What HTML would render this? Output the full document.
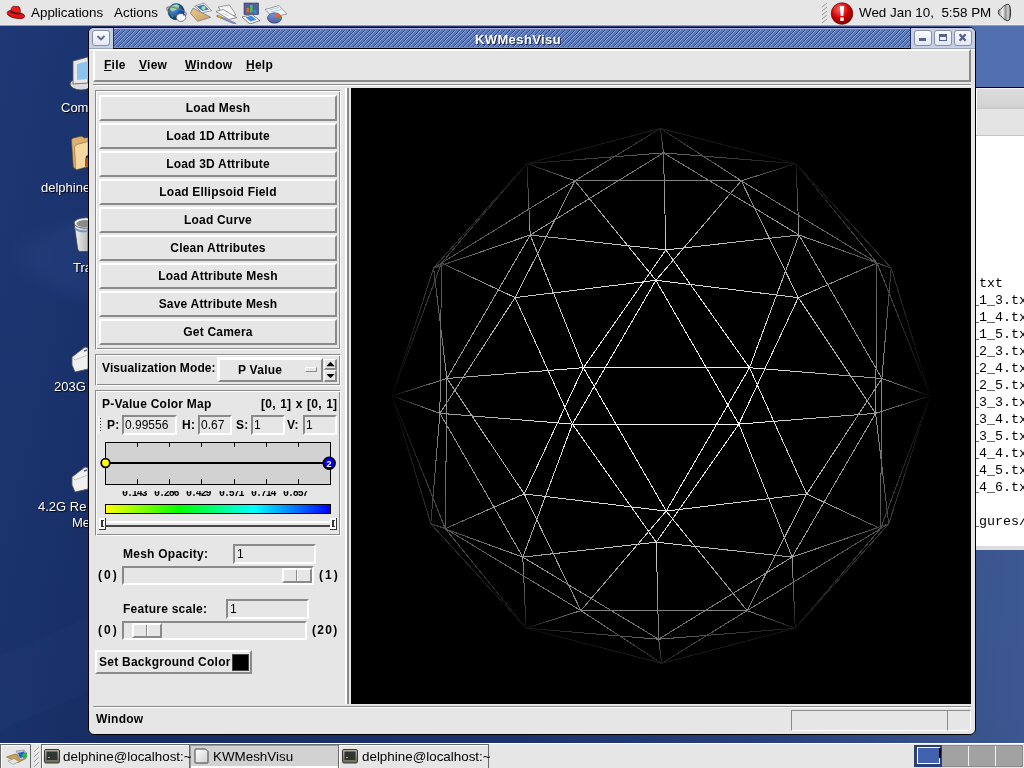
<!DOCTYPE html>
<html><head><meta charset="utf-8">
<style>
*{margin:0;padding:0;box-sizing:border-box}
html,body{width:1024px;height:768px;overflow:hidden}
body{position:relative;font-family:"Liberation Sans",sans-serif;background:#1b3266}
.a{position:absolute}
body *{will-change:transform}
.r{border-style:solid;border-width:2px;border-color:#fff #8a8a8a #8a8a8a #fff}
.s{border-style:solid;border-width:2px;border-color:#8a8a8a #fff #fff #8a8a8a}
.g{border-style:solid;border-width:1px;border-color:#8a8a8a #fff #fff #8a8a8a;box-shadow:inset 1px 1px 0 #fff, inset -1px -1px 0 #8a8a8a}
.tk{font-size:12px;font-weight:bold;color:#000;white-space:pre;line-height:14px;letter-spacing:0.25px}
.tn{font-size:12px;color:#000;white-space:pre;line-height:14px}
.btn{left:99px;width:238px;height:26px;background:#e6e6e6;font-size:12px;font-weight:bold;text-align:center;line-height:23px;letter-spacing:0.2px}
.ptxt{font-size:13.4px;color:#000;white-space:pre;line-height:15px}
.dtxt{font-size:13px;color:#fff;white-space:pre;line-height:15px;text-shadow:1px 1px 1px #000}
.ent{background:#e6e6e6}
</style></head><body>
<div class="a" style="left:0;top:25px;width:1024px;height:718px;background:linear-gradient(to bottom,rgba(40,70,140,0.10),rgba(0,0,20,0.10)),linear-gradient(90deg,#1d3773 0%,#18316b 12%,#1f3874 50%,#2c4784 75%,#3b5896 90%,#43619f 100%)"></div>
<svg class="a" style="left:0;top:26px" width="90" height="716" viewBox="0 0 90 716">
 <defs><radialGradient id="sw1" cx="0.5" cy="0.5" r="0.5"><stop offset="0.7" stop-color="#3a5aa0" stop-opacity="0.18"/><stop offset="1" stop-color="#3a5aa0" stop-opacity="0"/></radialGradient></defs>
 <ellipse cx="130" cy="232" rx="125" ry="52" fill="url(#sw1)"/>
 <path d="M0 630 L90 590 L90 665 L0 705Z" fill="#3a5aa0" fill-opacity="0.07"/>
</svg>
<!-- top panel -->
<div class="a" style="left:0;top:0;width:1024px;height:24px;background:#e6e6e6"></div>
<div class="a" style="left:0;top:24px;width:1024px;height:1px;background:#ececec"></div>
<div class="a" style="left:0;top:25px;width:1024px;height:1px;background:#a09c94"></div>
<svg class="a" style="left:6px;top:5px" width="20" height="15" viewBox="0 0 20 15">
 <path d="M1.2 7.5 Q2 5.2 5 5.6 L14.5 8 Q19 9 18.6 11.5 Q17.8 14.2 12 13.6 Q5 12.8 2.2 10.2 Q0.8 8.8 1.2 7.5Z" fill="#e81212" stroke="#3a0808" stroke-width="0.7"/>
 <path d="M4.8 6.6 Q5 1.8 7.5 1.2 Q9 1 10 1.6 Q11.5 0.9 13 1.8 Q14.6 3 14.4 8.6 Q9.5 8.8 4.8 6.6Z" fill="#f21a1a" stroke="#400808" stroke-width="0.6"/>
 <path d="M4.8 5.8 Q9.5 8.2 14.5 8 L14.5 9.6 Q9.3 9.8 4.8 7.5Z" fill="#1c1c1c"/>
</svg>
<div class="a ptxt" style="left:31px;top:5px">Applications</div>
<div class="a ptxt" style="left:114px;top:5px">Actions</div>
<!-- launchers -->
<svg class="a" style="left:165px;top:0px" width="124" height="24" viewBox="0 0 124 24">
 <defs>
  <radialGradient id="gl" cx="0.35" cy="0.3" r="0.75"><stop offset="0" stop-color="#60b0f0"/><stop offset="0.6" stop-color="#1050b0"/><stop offset="1" stop-color="#062a70"/></radialGradient>
  <linearGradient id="env" x1="0" y1="0" x2="1" y2="1"><stop offset="0" stop-color="#e8c890"/><stop offset="1" stop-color="#c8a060"/></linearGradient>
  <linearGradient id="pie" x1="0" y1="0" x2="0" y2="1"><stop offset="0" stop-color="#6a9ae8"/><stop offset="1" stop-color="#5a5aa0"/></linearGradient>
 </defs>
 <circle cx="11.2" cy="11.7" r="8.1" fill="url(#gl)" stroke="#102040" stroke-width="0.5"/>
 <path d="M5 9 Q7 4.5 12 4.2 Q15 5.5 13.5 8.5 Q10 10 7 11.5Z" fill="#a0dca0"/>
 <path d="M5 13 Q7 15 9 17 L7 17Z" fill="#40a050"/>
 <ellipse cx="11.5" cy="11.5" rx="10.3" ry="3.4" transform="rotate(18 11.5 11.5)" fill="none" stroke="#707070" stroke-width="1.1"/>
 <ellipse cx="16" cy="17.5" rx="4.8" ry="3.9" fill="#f6f6f6" stroke="#505050" stroke-width="0.7"/>
 <path d="M18 15 L20 14.6" stroke="#4040a0" stroke-width="1"/>
 <path d="M25.4 13.2 L28 8.1 L45.8 17.3 L32.6 21.3Z" fill="url(#env)" stroke="#707070" stroke-width="0.7"/>
 <path d="M29.5 6.1 L39.2 3 L46.8 10.7 L37.1 12.7Z" fill="#f8f8f8" stroke="#7a7a7a" stroke-width="0.7"/>
 <path d="M31.8 6.6 L38.6 4.5 L44 9.6 L37.3 11Z" fill="#3a70c8"/>
 <circle cx="38.5" cy="8" r="2.1" fill="#a8e0a8"/>
 <path d="M53.3 7 L64.5 5 L71 15 L60 17Z" fill="#f4f4f4" stroke="#666" stroke-width="0.6"/>
 <path d="M51 11.5 L58 9.5 L71.8 17.5 L64 19.5Z" fill="#fafafa" stroke="#555" stroke-width="0.6"/>
 <path d="M57 13 L64 16" stroke="#bbb" stroke-width="0.6"/>
 <path d="M52.5 16 L70 23.5" stroke="#8088b8" stroke-width="2.4" stroke-linecap="round"/>
 <path d="M53 16.2 L56.5 17.7" stroke="#c8a030" stroke-width="2.4"/>
 <rect x="79" y="3" width="14.6" height="11.5" fill="#50609a" stroke="#303a60" stroke-width="0.6"/>
 <rect x="81.5" y="8" width="2.6" height="4.5" fill="#f06030"/>
 <rect x="85" y="5" width="2.6" height="7.5" fill="#40c060"/>
 <rect x="88.8" y="10" width="2.6" height="3" fill="#3a8ae8"/>
 <path d="M77 17 L87 14.5 L95 20.5 L85 24Z" fill="#f8f8f8" stroke="#555" stroke-width="0.7"/>
 <path d="M80.5 17.3 L86.5 15.8 L91.5 19.8 L85.5 21.6Z" fill="#3a8ae8"/>
 <path d="M100 9.5 L114 5.5 L122 14 L108 17Z" fill="#f0f6fa" stroke="#666" stroke-width="0.6"/>
 <path d="M104 10 L114 7.5 M106 12 L116 9.5" stroke="#a8d0e8" stroke-width="1"/>
 <ellipse cx="109.5" cy="18" rx="7" ry="5.2" fill="url(#pie)" stroke="#334" stroke-width="0.6"/>
 <path d="M109.5 18 L111 12.9 Q115.5 13.5 116.4 16.5Z" fill="#f06030"/>
 <path d="M109.5 18 L116.4 16.5 Q116.6 18 116.3 19Z" fill="#40a050"/>
</svg>
<!-- tray -->
<svg class="a" style="left:821px;top:2px" width="8" height="21" viewBox="0 0 8 21"><path d="M1 5 L6 1 M1 9 L6 5 M1 13 L6 9 M1 17 L6 13 M1 21 L6 17" stroke="#9a9a9a" stroke-width="1"/></svg>
<svg class="a" style="left:830px;top:2px" width="24" height="23" viewBox="0 0 24 23">
 <defs><radialGradient id="gr" cx="0.4" cy="0.3" r="0.7"><stop offset="0" stop-color="#ff6a6a"/><stop offset="0.6" stop-color="#d00000"/><stop offset="1" stop-color="#800000"/></radialGradient></defs>
 <circle cx="12" cy="11.5" r="10.8" fill="url(#gr)" stroke="#500" stroke-width="0.6"/>
 <path d="M9.8 4 L14.2 4 L13.3 14 L10.7 14Z" fill="#fff"/><rect x="10.3" y="15.5" width="3.4" height="3.4" fill="#fff"/>
</svg>
<div class="a ptxt" style="left:859px;top:5px">Wed Jan 10,&nbsp; 5:58 PM</div>
<svg class="a" style="left:996px;top:3px" width="18" height="19" viewBox="0 0 18 19">
 <defs><linearGradient id="gv" x1="0" y1="0" x2="1" y2="0"><stop offset="0" stop-color="#8a8a8a"/><stop offset="0.35" stop-color="#f0f0f0"/><stop offset="0.6" stop-color="#909090"/><stop offset="0.8" stop-color="#d8d8d8"/><stop offset="1" stop-color="#505050"/></linearGradient></defs>
 <path d="M2.3 9.5 Q2.2 6.8 4.5 6.2 Q7.5 2.5 11 1.2 Q14.6 0.6 14.6 9.2 Q14.6 17.8 11.2 17.9 Q7.5 16.5 4.6 12.8 Q2.4 12 2.3 9.5Z" fill="url(#gv)" stroke="#2a2a2a" stroke-width="0.9"/>
</svg>
<!-- desktop icons -->
<svg class="a" style="left:66px;top:56px" width="22" height="36" viewBox="0 0 22 36">
 <ellipse cx="15" cy="28" rx="11" ry="6" fill="#dcdcdc" stroke="#444" stroke-width="0.8"/>
 <path d="M7 5 L22 1 L22 27 L7 28Z" fill="#e8e8e8" stroke="#555" stroke-width="0.8"/>
 <path d="M11 8 L22 5 L22 23 L11 24Z" fill="#8cc4ee"/>
</svg>
<div class="a dtxt" style="left:61px;top:100px">Com</div>
<svg class="a" style="left:70px;top:135px" width="18" height="36" viewBox="0 0 18 36">
 <path d="M1.5 6 Q1 3.5 3.5 3 L11 1.2 Q13 1 14 3 L18 2.5 L18 30 L5.5 33.5 Q3.5 34 3.2 31.5Z" fill="#dcb070" stroke="#6a4a20" stroke-width="0.7"/>
 <path d="M4.5 14 Q4 10.5 7 9.5 L18 6.5 L18 31.5 L7 34.5 Q5.5 34.8 5.4 33 Q5.6 24 4.5 14Z" fill="#f6d8a0" stroke="#8a6a30" stroke-width="0.6"/>
 <path d="M15 24 L18 23 L18 31 L15 32Z" fill="#b05810"/>
 <path d="M16 21 L18 20 L18 23 L15.5 24Z" fill="#303030"/>
</svg>
<div class="a dtxt" style="left:41px;top:180px">delphine</div>
<svg class="a" style="left:73px;top:214px" width="15" height="38" viewBox="0 0 15 38">
 <defs><linearGradient id="trb" x1="0" x2="1"><stop offset="0" stop-color="#f4f4f4"/><stop offset="1" stop-color="#b8b8b8"/></linearGradient></defs>
 <path d="M1.2 10 L15 8.5 L15 37.5 L7 37.5 Q5 37 4.6 34.5Z" fill="url(#trb)" stroke="#444" stroke-width="0.8"/>
 <ellipse cx="12.5" cy="9" rx="11.5" ry="5.2" fill="#ececec" stroke="#444" stroke-width="0.8"/>
 <ellipse cx="13" cy="9.6" rx="9.5" ry="3.6" fill="#8a8a8a"/>
 <path d="M1.8 14.5 Q7 18.5 15 17" stroke="#6a94cc" stroke-width="1.6" fill="none"/>
</svg>
<div class="a dtxt" style="left:73px;top:260px">Tra</div>
<svg class="a" style="left:71px;top:345px" width="17" height="28" viewBox="0 0 17 28">
 <path d="M1 12 L14 2 L17 3 L17 24 L4 27 L1 20Z" fill="#f0f0f0" stroke="#555" stroke-width="0.8"/>
 <path d="M1 12 L4 15 L17 10" stroke="#bbb" stroke-width="0.8" fill="none"/>
 <path d="M13 6 L16 5" stroke="#5a5aa0" stroke-width="1.5"/>
</svg>
<div class="a dtxt" style="left:54px;top:379px">203G</div>
<svg class="a" style="left:71px;top:465px" width="17" height="28" viewBox="0 0 17 28">
 <path d="M1 12 L14 2 L17 3 L17 24 L4 27 L1 20Z" fill="#f0f0f0" stroke="#555" stroke-width="0.8"/>
 <path d="M1 12 L4 15 L17 10" stroke="#bbb" stroke-width="0.8" fill="none"/>
 <path d="M13 6 L16 5" stroke="#5a5aa0" stroke-width="1.5"/>
</svg>
<div class="a dtxt" style="left:38px;top:499px">4.2G Re</div>
<div class="a dtxt" style="left:72px;top:515px">Me</div>
<!-- background window (right) -->
<div class="a" style="left:970px;top:26px;width:54px;height:61px;background:#5270b0"></div>
<div class="a" style="left:970px;top:87px;width:54px;height:1px;background:#000"></div>
<div class="a" style="left:970px;top:88px;width:54px;height:1px;background:#f4f4f4"></div>
<div class="a" style="left:970px;top:89px;width:54px;height:20px;background:linear-gradient(#dcdcdc,#d4d4d4 80%,#c9c9c9)"></div>
<div class="a" style="left:970px;top:109px;width:54px;height:26px;background:#e4e4e4"></div>
<div class="a" style="left:970px;top:135px;width:54px;height:1px;background:#c4c4c4"></div>
<div class="a" style="left:970px;top:136px;width:54px;height:410px;background:#fff"></div>
<div class="a" style="left:970px;top:546px;width:54px;height:4px;background:#dedede"></div>
<div class="a" style="left:976px;top:88px;width:1px;height:47px;background:#fff"></div>
<div class="a" style="left:976px;top:136px;width:48px;height:410px;overflow:hidden">
<div class="a" style="left:-5px;top:139px;font-family:'Liberation Mono',monospace;font-size:13.34px;line-height:17px;color:#000;white-space:pre"> txt
_1_3.txt
_1_4.txt
_1_5.txt
_2_3.txt
_2_4.txt
_2_5.txt
_3_3.txt
_3_4.txt
_3_5.txt
_4_4.txt
_4_5.txt
_4_6.txt

_gures/</div></div>
<!-- main window -->
<div class="a" style="left:88px;top:27px;width:888px;height:708px;background:#e6e6e6;border:1px solid #000;border-radius:6px;overflow:hidden">
<svg class="a" style="left:0;top:0" width="886" height="21" viewBox="0 0 886 21" shape-rendering="crispEdges">
 <defs><pattern id="st" patternUnits="userSpaceOnUse" width="5" height="5" x="3" y="0">
  <rect width="5" height="5" fill="#5b7abd"/>
  <rect x="0" y="4" width="1" height="1" fill="#374e8a"/><rect x="1" y="3" width="1" height="1" fill="#374e8a"/><rect x="2" y="2" width="1" height="1" fill="#374e8a"/><rect x="3" y="1" width="1" height="1" fill="#374e8a"/><rect x="4" y="0" width="1" height="1" fill="#374e8a"/>
  <rect x="1" y="4" width="1" height="1" fill="#8aa2d8"/><rect x="2" y="3" width="1" height="1" fill="#8aa2d8"/><rect x="3" y="2" width="1" height="1" fill="#8aa2d8"/><rect x="4" y="1" width="1" height="1" fill="#8aa2d8"/><rect x="0" y="0" width="1" height="1" fill="#8aa2d8"/>
 </pattern></defs>
 <rect x="24" y="0" width="797" height="20" fill="url(#st)"/>
 <rect x="24" y="0" width="797" height="1" fill="#a3b6e2"/>
 <rect x="24" y="1" width="797" height="1" fill="#5e7dc0"/>
 <rect x="24" y="19" width="797" height="1" fill="#6d8acb"/>
 <rect x="0" y="0" width="24" height="20" fill="#c6cee2"/>
 <rect x="821" y="0" width="65" height="20" fill="#c6cee2"/>
 <rect x="24" y="0" width="1" height="20" fill="#23325e"/>
 <rect x="821" y="0" width="1" height="20" fill="#23325e"/>
 <rect x="24" y="20" width="798" height="1" fill="#000"/>
 <rect x="0" y="20" width="24" height="1" fill="#9aa6c4"/>
 <rect x="822" y="20" width="64" height="1" fill="#9aa6c4"/>
 <rect x="0" y="21" width="886" height="1" fill="#fff"/>
</svg>
</div>
<div class="a" style="left:92px;top:30px;width:18px;height:16px;border:1px solid #858fac;border-radius:3px;background:linear-gradient(#fafbfe,#e4e8f3)"></div>
<svg class="a" style="left:96px;top:34px" width="10" height="8" viewBox="0 0 10 8"><path d="M1.5 2 L5 5.5 L8.5 2" stroke="#5a6890" stroke-width="1.8" fill="none"/></svg>
<div class="a" style="left:914px;top:30px;width:18px;height:16px;border:1px solid #858fac;border-radius:3px;background:linear-gradient(#fafbfe,#e4e8f3)"></div>
<div class="a" style="left:919px;top:38px;width:7px;height:3px;background:#56648c"></div>
<div class="a" style="left:934px;top:30px;width:18px;height:16px;border:1px solid #858fac;border-radius:3px;background:linear-gradient(#fafbfe,#e4e8f3)"></div>
<div class="a" style="left:939px;top:34px;width:8px;height:7px;border:1px solid #56648c;border-top-width:3px"></div>
<div class="a" style="left:954px;top:30px;width:18px;height:16px;border:1px solid #858fac;border-radius:3px;background:linear-gradient(#fafbfe,#e4e8f3)"></div>
<svg class="a" style="left:958px;top:33px" width="10" height="9" viewBox="0 0 10 9"><path d="M1.6 1.3 L7.6 7.7 M7.6 1.3 L1.6 7.7" stroke="#56648c" stroke-width="2.4"/></svg>
<div class="a" style="left:398px;top:32px;width:240px;text-align:center;font-size:13px;font-weight:bold;color:#fff;line-height:15px;letter-spacing:0.4px;text-shadow:1px 1px 0 #1c2448">KWMeshVisu</div>
<div class="a" style="left:89px;top:49px;width:886px;height:1px;background:#fff"></div>
<!-- menubar -->
<div class="a r" style="left:93px;top:49px;width:878px;height:33px"></div>
<div class="a tk" style="left:104px;top:58px"><u>F</u>ile</div>
<div class="a tk" style="left:139px;top:58px"><u>V</u>iew</div>
<div class="a tk" style="left:185px;top:58px"><u>W</u>indow</div>
<div class="a tk" style="left:246px;top:58px"><u>H</u>elp</div>
<div class="a" style="left:93px;top:84px;width:878px;height:1px;background:#8a8a8a"></div>
<div class="a" style="left:93px;top:85px;width:878px;height:1px;background:#fff"></div>
<!-- left panel -->
<div class="a g" style="left:95px;top:90px;width:246px;height:260px"></div>
<div class="a r btn" style="top:95px">Load Mesh</div>
<div class="a r btn" style="top:123px">Load 1D Attribute</div>
<div class="a r btn" style="top:151px">Load 3D Attribute</div>
<div class="a r btn" style="top:179px">Load Ellipsoid Field</div>
<div class="a r btn" style="top:207px">Load Curve</div>
<div class="a r btn" style="top:235px">Clean Attributes</div>
<div class="a r btn" style="top:263px">Load Attribute Mesh</div>
<div class="a r btn" style="top:291px">Save Attribute Mesh</div>
<div class="a r btn" style="top:319px">Get Camera</div>
<div class="a g" style="left:95px;top:354px;width:246px;height:32px"></div>
<div class="a tk" style="left:102px;top:361px;letter-spacing:0.1px">Visualization Mode:</div>
<div class="a r" style="left:218px;top:358px;width:105px;height:24px;box-shadow:-1px -1px 0 #fff"></div>
<div class="a tk" style="left:238px;top:363px">P Value</div>
<div class="a r" style="left:305px;top:367px;width:12px;height:5px;border-width:1px"></div>
<div class="a r" style="left:324px;top:359px;width:13px;height:11px;border-width:1px 2px 2px 1px"></div>
<div class="a r" style="left:324px;top:370px;width:13px;height:12px;border-width:1px 2px 2px 1px"></div>
<svg class="a" style="left:326px;top:361px" width="9" height="18" viewBox="0 0 9 18"><path d="M0.3 5.2 L4.5 0.8 L8.7 5.2Z M0.3 13 L8.7 13 L4.5 17.3Z" fill="#000"/></svg>
<div class="a g" style="left:95px;top:390px;width:246px;height:146px"></div>
<div class="a tk" style="left:102px;top:397px">P-Value Color Map</div>
<div class="a tk" style="left:261px;top:397px;word-spacing:0.8px">[0, 1] x [0, 1]</div>
<svg class="a" style="left:98px;top:415px" width="4" height="20" viewBox="0 0 4 20"><path d="M1 1 L1 19" stroke="#fff" stroke-width="1"/><path d="M2.5 3 L2.5 18" stroke="#333" stroke-width="1" stroke-dasharray="1 2"/></svg>
<div class="a tk" style="left:107px;top:418px">P:</div>
<div class="a s ent" style="left:122px;top:415px;width:55px;height:20px"></div>
<div class="a tn" style="left:125px;top:418px">0.99556</div>
<div class="a tk" style="left:182px;top:418px">H:</div>
<div class="a s ent" style="left:198px;top:415px;width:34px;height:20px"></div>
<div class="a tn" style="left:201px;top:418px">0.67</div>
<div class="a tk" style="left:236px;top:418px">S:</div>
<div class="a s ent" style="left:251px;top:415px;width:34px;height:20px"></div>
<div class="a tn" style="left:254px;top:418px">1</div>
<div class="a tk" style="left:287px;top:418px">V:</div>
<div class="a s ent" style="left:303px;top:415px;width:34px;height:20px"></div>
<div class="a tn" style="left:306px;top:418px">1</div>
<svg class="a" style="left:100px;top:440px" width="240" height="96" viewBox="0 0 240 96">
 <rect x="5.5" y="2.5" width="225" height="42" fill="#d2d2d2" stroke="#000" stroke-width="1"/>
 <g stroke="#000" stroke-width="1">
  <path d="M37.5 3 V7 M69.5 3 V7 M101.5 3 V7 M134.5 3 V7 M166.5 3 V7 M198.5 3 V7"/>
  <path d="M37.5 39 V44 M69.5 39 V44 M101.5 39 V44 M134.5 39 V44 M166.5 39 V44 M198.5 39 V44"/>
 </g>
 <path d="M5.5 23 H229" stroke="#000" stroke-width="2"/>
 <circle cx="5.5" cy="23" r="4.3" fill="#ffff00" stroke="#000" stroke-width="1.7"/>
 <circle cx="229.2" cy="23.2" r="5.9" fill="#0000ff" stroke="#000" stroke-width="1.6"/>
 <text x="229" y="26.5" font-family="Liberation Sans" font-size="9" font-weight="bold" fill="#fff" text-anchor="middle">2</text>
 <defs><linearGradient id="cm" x1="0" x2="1"><stop offset="0" stop-color="#ffff00"/><stop offset="0.33" stop-color="#00ff00"/><stop offset="0.66" stop-color="#00ffff"/><stop offset="1" stop-color="#0000ff"/></linearGradient></defs>
 <rect x="5.5" y="64.5" width="225" height="9" fill="url(#cm)" stroke="#000" stroke-width="1"/>
</svg>
<div class="a" style="left:100px;top:491px;width:236px;height:5px;overflow:hidden">
 <div class="a" style="left:0;top:-3px;width:236px;height:14px;font-family:'Liberation Mono',monospace;font-size:10px;font-weight:bold;line-height:12px;white-space:pre;color:#000"><span class="a" style="top:0;left:22px;letter-spacing:-1.1px">0.143</span><span class="a" style="top:0;left:54px;letter-spacing:-1.1px">0.286</span><span class="a" style="top:0;left:86px;letter-spacing:-1.1px">0.429</span><span class="a" style="top:0;left:119px;letter-spacing:-1.1px">0.571</span><span class="a" style="top:0;left:151px;letter-spacing:-1.1px">0.714</span><span class="a" style="top:0;left:183px;letter-spacing:-1.1px">0.857</span></div>
</div>
<div class="a" style="left:106px;top:521px;width:224px;height:2px;background:#fff"></div>
<div class="a" style="left:106px;top:525px;width:224px;height:2px;background:#454545"></div>
<div class="a" style="left:99px;top:518px;width:7px;height:12px;background:#fff;border-right:1px solid #333;border-bottom:1px solid #333"></div>
<div class="a" style="left:330px;top:518px;width:7px;height:12px;background:#fff;border-right:1px solid #333;border-bottom:1px solid #333"></div>
<div class="a" style="left:101px;top:520px;width:3px;height:7px;border-left:2px solid #333;border-top:1px solid #333;border-bottom:1px solid #333"></div>
<div class="a" style="left:332px;top:520px;width:3px;height:7px;border-left:2px solid #333;border-top:1px solid #333;border-bottom:1px solid #333"></div>
<!-- opacity -->
<div class="a tk" style="left:123px;top:547px">Mesh Opacity:</div>
<div class="a s ent" style="left:233px;top:544px;width:83px;height:20px"></div>
<div class="a tn" style="left:237px;top:547px">1</div>
<div class="a tk" style="left:98px;top:568px;letter-spacing:2px">(0)</div>
<div class="a s" style="left:122px;top:566px;width:192px;height:19px"></div>
<div class="a r" style="left:282px;top:568px;width:30px;height:15px;border-width:2px"></div>
<div class="a" style="left:296px;top:570px;width:1px;height:11px;background:#8a8a8a"></div>
<div class="a" style="left:297px;top:570px;width:1px;height:11px;background:#fff"></div>
<div class="a tk" style="left:319px;top:568px;letter-spacing:2px">(1)</div>
<div class="a tk" style="left:123px;top:602px">Feature scale:</div>
<div class="a s ent" style="left:226px;top:599px;width:83px;height:20px"></div>
<div class="a tn" style="left:230px;top:602px">1</div>
<div class="a tk" style="left:98px;top:623px;letter-spacing:2px">(0)</div>
<div class="a s" style="left:122px;top:621px;width:185px;height:19px"></div>
<div class="a r" style="left:132px;top:623px;width:30px;height:15px;border-width:2px"></div>
<div class="a" style="left:146px;top:625px;width:1px;height:11px;background:#8a8a8a"></div>
<div class="a" style="left:147px;top:625px;width:1px;height:11px;background:#fff"></div>
<div class="a tk" style="left:312px;top:623px;letter-spacing:1.3px">(20)</div>
<div class="a r" style="left:95px;top:650px;width:157px;height:24px"></div>
<div class="a tk" style="left:99px;top:655px">Set Background Color</div>
<div class="a" style="left:232px;top:654px;width:17px;height:17px;background:#000;border:1px solid #444"></div>
<!-- sash -->
<div class="a" style="left:345px;top:88px;width:2px;height:616px;background:#fff"></div>
<div class="a" style="left:347px;top:88px;width:2px;height:616px;background:#8a8a8a"></div>
<div class="a" style="left:351px;top:88px;width:620px;height:616px;background:#000;overflow:hidden"><svg width="620" height="616" viewBox="0 0 620 616" style="position:absolute;left:0;top:0" shape-rendering="crispEdges"><defs><linearGradient id="g0" gradientUnits="userSpaceOnUse" x1="455.7" y1="406.0" x2="398.5" y2="279.7"><stop offset="0" stop-color="rgb(193,193,193)"/><stop offset="1" stop-color="rgb(239,239,239)"/></linearGradient><linearGradient id="g1" gradientUnits="userSpaceOnUse" x1="455.7" y1="406.0" x2="530.9" y2="290.5"><stop offset="0" stop-color="rgb(193,193,193)"/><stop offset="1" stop-color="rgb(145,145,145)"/></linearGradient><linearGradient id="g2" gradientUnits="userSpaceOnUse" x1="455.7" y1="406.0" x2="529.5" y2="440.7"><stop offset="0" stop-color="rgb(193,193,193)"/><stop offset="1" stop-color="rgb(77,77,77)"/></linearGradient><linearGradient id="g3" gradientUnits="userSpaceOnUse" x1="455.7" y1="406.0" x2="396.1" y2="522.6"><stop offset="0" stop-color="rgb(193,193,193)"/><stop offset="1" stop-color="rgb(130,130,130)"/></linearGradient><linearGradient id="g4" gradientUnits="userSpaceOnUse" x1="455.7" y1="406.0" x2="315.2" y2="423.1"><stop offset="0" stop-color="rgb(193,193,193)"/><stop offset="1" stop-color="rgb(230,230,230)"/></linearGradient><linearGradient id="g5" gradientUnits="userSpaceOnUse" x1="537.7" y1="435.8" x2="579.1" y2="307.9"><stop offset="0" stop-color="rgb(62,62,62)"/><stop offset="1" stop-color="rgb(5,5,5)"/></linearGradient><linearGradient id="g6" gradientUnits="userSpaceOnUse" x1="537.7" y1="435.8" x2="529.5" y2="440.7"><stop offset="0" stop-color="rgb(62,62,62)"/><stop offset="1" stop-color="rgb(77,77,77)"/></linearGradient><linearGradient id="g7" gradientUnits="userSpaceOnUse" x1="537.7" y1="435.8" x2="444.2" y2="540.3"><stop offset="0" stop-color="rgb(62,62,62)"/><stop offset="1" stop-color="rgb(20,20,20)"/></linearGradient><linearGradient id="g8" gradientUnits="userSpaceOnUse" x1="537.7" y1="435.8" x2="524.6" y2="325.3"><stop offset="0" stop-color="rgb(62,62,62)"/><stop offset="1" stop-color="rgb(153,153,153)"/></linearGradient><linearGradient id="g9" gradientUnits="userSpaceOnUse" x1="537.7" y1="435.8" x2="441.1" y2="469.1"><stop offset="0" stop-color="rgb(62,62,62)"/><stop offset="1" stop-color="rgb(162,162,162)"/></linearGradient><linearGradient id="g10" gradientUnits="userSpaceOnUse" x1="82.6" y1="180.1" x2="95.9" y2="290.5"><stop offset="0" stop-color="rgb(62,62,62)"/><stop offset="1" stop-color="rgb(153,153,153)"/></linearGradient><linearGradient id="g11" gradientUnits="userSpaceOnUse" x1="82.6" y1="180.1" x2="179.2" y2="147.0"><stop offset="0" stop-color="rgb(62,62,62)"/><stop offset="1" stop-color="rgb(162,162,162)"/></linearGradient><linearGradient id="g12" gradientUnits="userSpaceOnUse" x1="82.6" y1="180.1" x2="175.9" y2="75.6"><stop offset="0" stop-color="rgb(62,62,62)"/><stop offset="1" stop-color="rgb(20,20,20)"/></linearGradient><linearGradient id="g13" gradientUnits="userSpaceOnUse" x1="82.6" y1="180.1" x2="90.5" y2="175.0"><stop offset="0" stop-color="rgb(62,62,62)"/><stop offset="1" stop-color="rgb(77,77,77)"/></linearGradient><linearGradient id="g14" gradientUnits="userSpaceOnUse" x1="82.6" y1="180.1" x2="41.0" y2="307.9"><stop offset="0" stop-color="rgb(62,62,62)"/><stop offset="1" stop-color="rgb(5,5,5)"/></linearGradient><linearGradient id="g15" gradientUnits="userSpaceOnUse" x1="164.1" y1="209.6" x2="304.9" y2="192.3"><stop offset="0" stop-color="rgb(193,193,193)"/><stop offset="1" stop-color="rgb(230,230,230)"/></linearGradient><linearGradient id="g16" gradientUnits="userSpaceOnUse" x1="164.1" y1="209.6" x2="223.9" y2="92.8"><stop offset="0" stop-color="rgb(193,193,193)"/><stop offset="1" stop-color="rgb(130,130,130)"/></linearGradient><linearGradient id="g17" gradientUnits="userSpaceOnUse" x1="164.1" y1="209.6" x2="90.5" y2="175.0"><stop offset="0" stop-color="rgb(193,193,193)"/><stop offset="1" stop-color="rgb(77,77,77)"/></linearGradient><linearGradient id="g18" gradientUnits="userSpaceOnUse" x1="164.1" y1="209.6" x2="88.9" y2="325.3"><stop offset="0" stop-color="rgb(193,193,193)"/><stop offset="1" stop-color="rgb(145,145,145)"/></linearGradient><linearGradient id="g19" gradientUnits="userSpaceOnUse" x1="164.1" y1="209.6" x2="221.4" y2="336.1"><stop offset="0" stop-color="rgb(193,193,193)"/><stop offset="1" stop-color="rgb(239,239,239)"/></linearGradient><linearGradient id="g20" gradientUnits="userSpaceOnUse" x1="309.4" y1="40.4" x2="312.5" y2="64.9"><stop offset="0" stop-color="rgb(28,28,28)"/><stop offset="1" stop-color="rgb(109,109,109)"/></linearGradient><linearGradient id="g21" gradientUnits="userSpaceOnUse" x1="309.4" y1="40.4" x2="445.0" y2="75.6"><stop offset="0" stop-color="rgb(28,28,28)"/><stop offset="1" stop-color="rgb(15,15,15)"/></linearGradient><linearGradient id="g22" gradientUnits="userSpaceOnUse" x1="309.4" y1="40.4" x2="390.3" y2="92.8"><stop offset="0" stop-color="rgb(28,28,28)"/><stop offset="1" stop-color="rgb(133,133,133)"/></linearGradient><linearGradient id="g23" gradientUnits="userSpaceOnUse" x1="309.4" y1="40.4" x2="223.9" y2="92.8"><stop offset="0" stop-color="rgb(28,28,28)"/><stop offset="1" stop-color="rgb(130,130,130)"/></linearGradient><linearGradient id="g24" gradientUnits="userSpaceOnUse" x1="309.4" y1="40.4" x2="175.9" y2="75.6"><stop offset="0" stop-color="rgb(28,28,28)"/><stop offset="1" stop-color="rgb(20,20,20)"/></linearGradient><linearGradient id="g25" gradientUnits="userSpaceOnUse" x1="540.2" y1="180.1" x2="448.0" y2="147.0"><stop offset="0" stop-color="rgb(53,53,53)"/><stop offset="1" stop-color="rgb(157,157,157)"/></linearGradient><linearGradient id="g26" gradientUnits="userSpaceOnUse" x1="540.2" y1="180.1" x2="530.9" y2="290.5"><stop offset="0" stop-color="rgb(53,53,53)"/><stop offset="1" stop-color="rgb(145,145,145)"/></linearGradient><linearGradient id="g27" gradientUnits="userSpaceOnUse" x1="540.2" y1="180.1" x2="579.1" y2="307.9"><stop offset="0" stop-color="rgb(53,53,53)"/><stop offset="1" stop-color="rgb(5,5,5)"/></linearGradient><linearGradient id="g28" gradientUnits="userSpaceOnUse" x1="540.2" y1="180.1" x2="526.0" y2="175.0"><stop offset="0" stop-color="rgb(53,53,53)"/><stop offset="1" stop-color="rgb(86,86,86)"/></linearGradient><linearGradient id="g29" gradientUnits="userSpaceOnUse" x1="540.2" y1="180.1" x2="445.0" y2="75.6"><stop offset="0" stop-color="rgb(53,53,53)"/><stop offset="1" stop-color="rgb(15,15,15)"/></linearGradient><linearGradient id="g30" gradientUnits="userSpaceOnUse" x1="79.8" y1="435.7" x2="175.1" y2="540.2"><stop offset="0" stop-color="rgb(53,53,53)"/><stop offset="1" stop-color="rgb(15,15,15)"/></linearGradient><linearGradient id="g31" gradientUnits="userSpaceOnUse" x1="79.8" y1="435.7" x2="94.3" y2="440.6"><stop offset="0" stop-color="rgb(53,53,53)"/><stop offset="1" stop-color="rgb(86,86,86)"/></linearGradient><linearGradient id="g32" gradientUnits="userSpaceOnUse" x1="79.8" y1="435.7" x2="41.0" y2="307.9"><stop offset="0" stop-color="rgb(53,53,53)"/><stop offset="1" stop-color="rgb(5,5,5)"/></linearGradient><linearGradient id="g33" gradientUnits="userSpaceOnUse" x1="79.8" y1="435.7" x2="88.9" y2="325.3"><stop offset="0" stop-color="rgb(53,53,53)"/><stop offset="1" stop-color="rgb(145,145,145)"/></linearGradient><linearGradient id="g34" gradientUnits="userSpaceOnUse" x1="79.8" y1="435.7" x2="171.8" y2="469.1"><stop offset="0" stop-color="rgb(53,53,53)"/><stop offset="1" stop-color="rgb(157,157,157)"/></linearGradient><linearGradient id="g35" gradientUnits="userSpaceOnUse" x1="310.7" y1="575.3" x2="444.2" y2="540.3"><stop offset="0" stop-color="rgb(28,28,28)"/><stop offset="1" stop-color="rgb(20,20,20)"/></linearGradient><linearGradient id="g36" gradientUnits="userSpaceOnUse" x1="310.7" y1="575.3" x2="396.1" y2="522.6"><stop offset="0" stop-color="rgb(28,28,28)"/><stop offset="1" stop-color="rgb(130,130,130)"/></linearGradient><linearGradient id="g37" gradientUnits="userSpaceOnUse" x1="310.7" y1="575.3" x2="229.9" y2="522.6"><stop offset="0" stop-color="rgb(28,28,28)"/><stop offset="1" stop-color="rgb(133,133,133)"/></linearGradient><linearGradient id="g38" gradientUnits="userSpaceOnUse" x1="310.7" y1="575.3" x2="175.1" y2="540.2"><stop offset="0" stop-color="rgb(28,28,28)"/><stop offset="1" stop-color="rgb(15,15,15)"/></linearGradient><linearGradient id="g39" gradientUnits="userSpaceOnUse" x1="310.7" y1="575.3" x2="307.6" y2="551.2"><stop offset="0" stop-color="rgb(28,28,28)"/><stop offset="1" stop-color="rgb(109,109,109)"/></linearGradient><linearGradient id="g40" gradientUnits="userSpaceOnUse" x1="305.3" y1="454.2" x2="441.1" y2="469.1"><stop offset="0" stop-color="rgb(214,214,214)"/><stop offset="1" stop-color="rgb(162,162,162)"/></linearGradient><linearGradient id="g41" gradientUnits="userSpaceOnUse" x1="305.3" y1="454.2" x2="307.6" y2="551.2"><stop offset="0" stop-color="rgb(214,214,214)"/><stop offset="1" stop-color="rgb(109,109,109)"/></linearGradient><linearGradient id="g42" gradientUnits="userSpaceOnUse" x1="305.3" y1="454.2" x2="171.8" y2="469.1"><stop offset="0" stop-color="rgb(214,214,214)"/><stop offset="1" stop-color="rgb(157,157,157)"/></linearGradient><linearGradient id="g43" gradientUnits="userSpaceOnUse" x1="305.3" y1="454.2" x2="221.4" y2="336.1"><stop offset="0" stop-color="rgb(214,214,214)"/><stop offset="1" stop-color="rgb(239,239,239)"/></linearGradient><linearGradient id="g44" gradientUnits="userSpaceOnUse" x1="305.3" y1="454.2" x2="387.9" y2="336.1"><stop offset="0" stop-color="rgb(214,214,214)"/><stop offset="1" stop-color="rgb(243,243,243)"/></linearGradient><linearGradient id="g45" gradientUnits="userSpaceOnUse" x1="447.3" y1="209.6" x2="526.0" y2="175.0"><stop offset="0" stop-color="rgb(199,199,199)"/><stop offset="1" stop-color="rgb(86,86,86)"/></linearGradient><linearGradient id="g46" gradientUnits="userSpaceOnUse" x1="447.3" y1="209.6" x2="524.6" y2="325.3"><stop offset="0" stop-color="rgb(199,199,199)"/><stop offset="1" stop-color="rgb(153,153,153)"/></linearGradient><linearGradient id="g47" gradientUnits="userSpaceOnUse" x1="447.3" y1="209.6" x2="304.9" y2="192.3"><stop offset="0" stop-color="rgb(199,199,199)"/><stop offset="1" stop-color="rgb(230,230,230)"/></linearGradient><linearGradient id="g48" gradientUnits="userSpaceOnUse" x1="447.3" y1="209.6" x2="390.3" y2="92.8"><stop offset="0" stop-color="rgb(199,199,199)"/><stop offset="1" stop-color="rgb(133,133,133)"/></linearGradient><linearGradient id="g49" gradientUnits="userSpaceOnUse" x1="447.3" y1="209.6" x2="387.9" y2="336.1"><stop offset="0" stop-color="rgb(199,199,199)"/><stop offset="1" stop-color="rgb(243,243,243)"/></linearGradient><linearGradient id="g50" gradientUnits="userSpaceOnUse" x1="173.2" y1="405.9" x2="229.9" y2="522.6"><stop offset="0" stop-color="rgb(199,199,199)"/><stop offset="1" stop-color="rgb(133,133,133)"/></linearGradient><linearGradient id="g51" gradientUnits="userSpaceOnUse" x1="173.2" y1="405.9" x2="315.2" y2="423.1"><stop offset="0" stop-color="rgb(199,199,199)"/><stop offset="1" stop-color="rgb(230,230,230)"/></linearGradient><linearGradient id="g52" gradientUnits="userSpaceOnUse" x1="173.2" y1="405.9" x2="232.4" y2="279.7"><stop offset="0" stop-color="rgb(199,199,199)"/><stop offset="1" stop-color="rgb(243,243,243)"/></linearGradient><linearGradient id="g53" gradientUnits="userSpaceOnUse" x1="173.2" y1="405.9" x2="95.9" y2="290.5"><stop offset="0" stop-color="rgb(199,199,199)"/><stop offset="1" stop-color="rgb(153,153,153)"/></linearGradient><linearGradient id="g54" gradientUnits="userSpaceOnUse" x1="173.2" y1="405.9" x2="94.3" y2="440.6"><stop offset="0" stop-color="rgb(199,199,199)"/><stop offset="1" stop-color="rgb(86,86,86)"/></linearGradient><linearGradient id="g55" gradientUnits="userSpaceOnUse" x1="314.9" y1="161.9" x2="398.5" y2="279.7"><stop offset="0" stop-color="rgb(214,214,214)"/><stop offset="1" stop-color="rgb(239,239,239)"/></linearGradient><linearGradient id="g56" gradientUnits="userSpaceOnUse" x1="314.9" y1="161.9" x2="448.0" y2="147.0"><stop offset="0" stop-color="rgb(214,214,214)"/><stop offset="1" stop-color="rgb(157,157,157)"/></linearGradient><linearGradient id="g57" gradientUnits="userSpaceOnUse" x1="314.9" y1="161.9" x2="232.4" y2="279.7"><stop offset="0" stop-color="rgb(214,214,214)"/><stop offset="1" stop-color="rgb(243,243,243)"/></linearGradient><linearGradient id="g58" gradientUnits="userSpaceOnUse" x1="314.9" y1="161.9" x2="312.5" y2="64.9"><stop offset="0" stop-color="rgb(214,214,214)"/><stop offset="1" stop-color="rgb(109,109,109)"/></linearGradient><linearGradient id="g59" gradientUnits="userSpaceOnUse" x1="314.9" y1="161.9" x2="179.2" y2="147.0"><stop offset="0" stop-color="rgb(214,214,214)"/><stop offset="1" stop-color="rgb(162,162,162)"/></linearGradient><linearGradient id="g60" gradientUnits="userSpaceOnUse" x1="398.5" y1="279.7" x2="448.0" y2="147.0"><stop offset="0" stop-color="rgb(239,239,239)"/><stop offset="1" stop-color="rgb(157,157,157)"/></linearGradient><linearGradient id="g61" gradientUnits="userSpaceOnUse" x1="398.5" y1="279.7" x2="530.9" y2="290.5"><stop offset="0" stop-color="rgb(239,239,239)"/><stop offset="1" stop-color="rgb(145,145,145)"/></linearGradient><linearGradient id="g62" gradientUnits="userSpaceOnUse" x1="398.5" y1="279.7" x2="315.2" y2="423.1"><stop offset="0" stop-color="rgb(239,239,239)"/><stop offset="1" stop-color="rgb(230,230,230)"/></linearGradient><linearGradient id="g63" gradientUnits="userSpaceOnUse" x1="398.5" y1="279.7" x2="232.4" y2="279.7"><stop offset="0" stop-color="rgb(239,239,239)"/><stop offset="1" stop-color="rgb(243,243,243)"/></linearGradient><linearGradient id="g64" gradientUnits="userSpaceOnUse" x1="448.0" y1="147.0" x2="530.9" y2="290.5"><stop offset="0" stop-color="rgb(157,157,157)"/><stop offset="1" stop-color="rgb(145,145,145)"/></linearGradient><linearGradient id="g65" gradientUnits="userSpaceOnUse" x1="448.0" y1="147.0" x2="312.5" y2="64.9"><stop offset="0" stop-color="rgb(157,157,157)"/><stop offset="1" stop-color="rgb(109,109,109)"/></linearGradient><linearGradient id="g66" gradientUnits="userSpaceOnUse" x1="448.0" y1="147.0" x2="445.0" y2="75.6"><stop offset="0" stop-color="rgb(157,157,157)"/><stop offset="1" stop-color="rgb(15,15,15)"/></linearGradient><linearGradient id="g67" gradientUnits="userSpaceOnUse" x1="530.9" y1="290.5" x2="579.1" y2="307.9"><stop offset="0" stop-color="rgb(145,145,145)"/><stop offset="1" stop-color="rgb(5,5,5)"/></linearGradient><linearGradient id="g68" gradientUnits="userSpaceOnUse" x1="530.9" y1="290.5" x2="529.5" y2="440.7"><stop offset="0" stop-color="rgb(145,145,145)"/><stop offset="1" stop-color="rgb(77,77,77)"/></linearGradient><linearGradient id="g69" gradientUnits="userSpaceOnUse" x1="579.1" y1="307.9" x2="529.5" y2="440.7"><stop offset="0" stop-color="rgb(5,5,5)"/><stop offset="1" stop-color="rgb(77,77,77)"/></linearGradient><linearGradient id="g70" gradientUnits="userSpaceOnUse" x1="579.1" y1="307.9" x2="526.0" y2="175.0"><stop offset="0" stop-color="rgb(5,5,5)"/><stop offset="1" stop-color="rgb(86,86,86)"/></linearGradient><linearGradient id="g71" gradientUnits="userSpaceOnUse" x1="579.1" y1="307.9" x2="524.6" y2="325.3"><stop offset="0" stop-color="rgb(5,5,5)"/><stop offset="1" stop-color="rgb(153,153,153)"/></linearGradient><linearGradient id="g72" gradientUnits="userSpaceOnUse" x1="529.5" y1="440.7" x2="444.2" y2="540.3"><stop offset="0" stop-color="rgb(77,77,77)"/><stop offset="1" stop-color="rgb(20,20,20)"/></linearGradient><linearGradient id="g73" gradientUnits="userSpaceOnUse" x1="529.5" y1="440.7" x2="396.1" y2="522.6"><stop offset="0" stop-color="rgb(77,77,77)"/><stop offset="1" stop-color="rgb(130,130,130)"/></linearGradient><linearGradient id="g74" gradientUnits="userSpaceOnUse" x1="444.2" y1="540.3" x2="396.1" y2="522.6"><stop offset="0" stop-color="rgb(20,20,20)"/><stop offset="1" stop-color="rgb(130,130,130)"/></linearGradient><linearGradient id="g75" gradientUnits="userSpaceOnUse" x1="444.2" y1="540.3" x2="441.1" y2="469.1"><stop offset="0" stop-color="rgb(20,20,20)"/><stop offset="1" stop-color="rgb(162,162,162)"/></linearGradient><linearGradient id="g76" gradientUnits="userSpaceOnUse" x1="444.2" y1="540.3" x2="307.6" y2="551.2"><stop offset="0" stop-color="rgb(20,20,20)"/><stop offset="1" stop-color="rgb(109,109,109)"/></linearGradient><linearGradient id="g77" gradientUnits="userSpaceOnUse" x1="396.1" y1="522.6" x2="229.9" y2="522.6"><stop offset="0" stop-color="rgb(130,130,130)"/><stop offset="1" stop-color="rgb(133,133,133)"/></linearGradient><linearGradient id="g78" gradientUnits="userSpaceOnUse" x1="396.1" y1="522.6" x2="315.2" y2="423.1"><stop offset="0" stop-color="rgb(130,130,130)"/><stop offset="1" stop-color="rgb(230,230,230)"/></linearGradient><linearGradient id="g79" gradientUnits="userSpaceOnUse" x1="229.9" y1="522.6" x2="315.2" y2="423.1"><stop offset="0" stop-color="rgb(133,133,133)"/><stop offset="1" stop-color="rgb(230,230,230)"/></linearGradient><linearGradient id="g80" gradientUnits="userSpaceOnUse" x1="229.9" y1="522.6" x2="175.1" y2="540.2"><stop offset="0" stop-color="rgb(133,133,133)"/><stop offset="1" stop-color="rgb(15,15,15)"/></linearGradient><linearGradient id="g81" gradientUnits="userSpaceOnUse" x1="229.9" y1="522.6" x2="94.3" y2="440.6"><stop offset="0" stop-color="rgb(133,133,133)"/><stop offset="1" stop-color="rgb(86,86,86)"/></linearGradient><linearGradient id="g82" gradientUnits="userSpaceOnUse" x1="315.2" y1="423.1" x2="232.4" y2="279.7"><stop offset="0" stop-color="rgb(230,230,230)"/><stop offset="1" stop-color="rgb(243,243,243)"/></linearGradient><linearGradient id="g83" gradientUnits="userSpaceOnUse" x1="232.4" y1="279.7" x2="95.9" y2="290.5"><stop offset="0" stop-color="rgb(243,243,243)"/><stop offset="1" stop-color="rgb(153,153,153)"/></linearGradient><linearGradient id="g84" gradientUnits="userSpaceOnUse" x1="232.4" y1="279.7" x2="179.2" y2="147.0"><stop offset="0" stop-color="rgb(243,243,243)"/><stop offset="1" stop-color="rgb(162,162,162)"/></linearGradient><linearGradient id="g85" gradientUnits="userSpaceOnUse" x1="526.0" y1="175.0" x2="524.6" y2="325.3"><stop offset="0" stop-color="rgb(86,86,86)"/><stop offset="1" stop-color="rgb(153,153,153)"/></linearGradient><linearGradient id="g86" gradientUnits="userSpaceOnUse" x1="526.0" y1="175.0" x2="445.0" y2="75.6"><stop offset="0" stop-color="rgb(86,86,86)"/><stop offset="1" stop-color="rgb(15,15,15)"/></linearGradient><linearGradient id="g87" gradientUnits="userSpaceOnUse" x1="526.0" y1="175.0" x2="390.3" y2="92.8"><stop offset="0" stop-color="rgb(86,86,86)"/><stop offset="1" stop-color="rgb(133,133,133)"/></linearGradient><linearGradient id="g88" gradientUnits="userSpaceOnUse" x1="524.6" y1="325.3" x2="441.1" y2="469.1"><stop offset="0" stop-color="rgb(153,153,153)"/><stop offset="1" stop-color="rgb(162,162,162)"/></linearGradient><linearGradient id="g89" gradientUnits="userSpaceOnUse" x1="524.6" y1="325.3" x2="387.9" y2="336.1"><stop offset="0" stop-color="rgb(153,153,153)"/><stop offset="1" stop-color="rgb(243,243,243)"/></linearGradient><linearGradient id="g90" gradientUnits="userSpaceOnUse" x1="312.5" y1="64.9" x2="445.0" y2="75.6"><stop offset="0" stop-color="rgb(109,109,109)"/><stop offset="1" stop-color="rgb(15,15,15)"/></linearGradient><linearGradient id="g91" gradientUnits="userSpaceOnUse" x1="312.5" y1="64.9" x2="179.2" y2="147.0"><stop offset="0" stop-color="rgb(109,109,109)"/><stop offset="1" stop-color="rgb(162,162,162)"/></linearGradient><linearGradient id="g92" gradientUnits="userSpaceOnUse" x1="312.5" y1="64.9" x2="175.9" y2="75.6"><stop offset="0" stop-color="rgb(109,109,109)"/><stop offset="1" stop-color="rgb(20,20,20)"/></linearGradient><linearGradient id="g93" gradientUnits="userSpaceOnUse" x1="445.0" y1="75.6" x2="390.3" y2="92.8"><stop offset="0" stop-color="rgb(15,15,15)"/><stop offset="1" stop-color="rgb(133,133,133)"/></linearGradient><linearGradient id="g94" gradientUnits="userSpaceOnUse" x1="95.9" y1="290.5" x2="179.2" y2="147.0"><stop offset="0" stop-color="rgb(153,153,153)"/><stop offset="1" stop-color="rgb(162,162,162)"/></linearGradient><linearGradient id="g95" gradientUnits="userSpaceOnUse" x1="95.9" y1="290.5" x2="94.3" y2="440.6"><stop offset="0" stop-color="rgb(153,153,153)"/><stop offset="1" stop-color="rgb(86,86,86)"/></linearGradient><linearGradient id="g96" gradientUnits="userSpaceOnUse" x1="95.9" y1="290.5" x2="41.0" y2="307.9"><stop offset="0" stop-color="rgb(153,153,153)"/><stop offset="1" stop-color="rgb(5,5,5)"/></linearGradient><linearGradient id="g97" gradientUnits="userSpaceOnUse" x1="179.2" y1="147.0" x2="175.9" y2="75.6"><stop offset="0" stop-color="rgb(162,162,162)"/><stop offset="1" stop-color="rgb(20,20,20)"/></linearGradient><linearGradient id="g98" gradientUnits="userSpaceOnUse" x1="175.1" y1="540.2" x2="94.3" y2="440.6"><stop offset="0" stop-color="rgb(15,15,15)"/><stop offset="1" stop-color="rgb(86,86,86)"/></linearGradient><linearGradient id="g99" gradientUnits="userSpaceOnUse" x1="175.1" y1="540.2" x2="307.6" y2="551.2"><stop offset="0" stop-color="rgb(15,15,15)"/><stop offset="1" stop-color="rgb(109,109,109)"/></linearGradient><linearGradient id="g100" gradientUnits="userSpaceOnUse" x1="175.1" y1="540.2" x2="171.8" y2="469.1"><stop offset="0" stop-color="rgb(15,15,15)"/><stop offset="1" stop-color="rgb(157,157,157)"/></linearGradient><linearGradient id="g101" gradientUnits="userSpaceOnUse" x1="94.3" y1="440.6" x2="41.0" y2="307.9"><stop offset="0" stop-color="rgb(86,86,86)"/><stop offset="1" stop-color="rgb(5,5,5)"/></linearGradient><linearGradient id="g102" gradientUnits="userSpaceOnUse" x1="441.1" y1="469.1" x2="307.6" y2="551.2"><stop offset="0" stop-color="rgb(162,162,162)"/><stop offset="1" stop-color="rgb(109,109,109)"/></linearGradient><linearGradient id="g103" gradientUnits="userSpaceOnUse" x1="441.1" y1="469.1" x2="387.9" y2="336.1"><stop offset="0" stop-color="rgb(162,162,162)"/><stop offset="1" stop-color="rgb(243,243,243)"/></linearGradient><linearGradient id="g104" gradientUnits="userSpaceOnUse" x1="307.6" y1="551.2" x2="171.8" y2="469.1"><stop offset="0" stop-color="rgb(109,109,109)"/><stop offset="1" stop-color="rgb(157,157,157)"/></linearGradient><linearGradient id="g105" gradientUnits="userSpaceOnUse" x1="304.9" y1="192.3" x2="390.3" y2="92.8"><stop offset="0" stop-color="rgb(230,230,230)"/><stop offset="1" stop-color="rgb(133,133,133)"/></linearGradient><linearGradient id="g106" gradientUnits="userSpaceOnUse" x1="304.9" y1="192.3" x2="223.9" y2="92.8"><stop offset="0" stop-color="rgb(230,230,230)"/><stop offset="1" stop-color="rgb(130,130,130)"/></linearGradient><linearGradient id="g107" gradientUnits="userSpaceOnUse" x1="304.9" y1="192.3" x2="221.4" y2="336.1"><stop offset="0" stop-color="rgb(230,230,230)"/><stop offset="1" stop-color="rgb(239,239,239)"/></linearGradient><linearGradient id="g108" gradientUnits="userSpaceOnUse" x1="304.9" y1="192.3" x2="387.9" y2="336.1"><stop offset="0" stop-color="rgb(230,230,230)"/><stop offset="1" stop-color="rgb(243,243,243)"/></linearGradient><linearGradient id="g109" gradientUnits="userSpaceOnUse" x1="390.3" y1="92.8" x2="223.9" y2="92.8"><stop offset="0" stop-color="rgb(133,133,133)"/><stop offset="1" stop-color="rgb(130,130,130)"/></linearGradient><linearGradient id="g110" gradientUnits="userSpaceOnUse" x1="223.9" y1="92.8" x2="175.9" y2="75.6"><stop offset="0" stop-color="rgb(130,130,130)"/><stop offset="1" stop-color="rgb(20,20,20)"/></linearGradient><linearGradient id="g111" gradientUnits="userSpaceOnUse" x1="223.9" y1="92.8" x2="90.5" y2="175.0"><stop offset="0" stop-color="rgb(130,130,130)"/><stop offset="1" stop-color="rgb(77,77,77)"/></linearGradient><linearGradient id="g112" gradientUnits="userSpaceOnUse" x1="175.9" y1="75.6" x2="90.5" y2="175.0"><stop offset="0" stop-color="rgb(20,20,20)"/><stop offset="1" stop-color="rgb(77,77,77)"/></linearGradient><linearGradient id="g113" gradientUnits="userSpaceOnUse" x1="90.5" y1="175.0" x2="41.0" y2="307.9"><stop offset="0" stop-color="rgb(77,77,77)"/><stop offset="1" stop-color="rgb(5,5,5)"/></linearGradient><linearGradient id="g114" gradientUnits="userSpaceOnUse" x1="90.5" y1="175.0" x2="88.9" y2="325.3"><stop offset="0" stop-color="rgb(77,77,77)"/><stop offset="1" stop-color="rgb(145,145,145)"/></linearGradient><linearGradient id="g115" gradientUnits="userSpaceOnUse" x1="41.0" y1="307.9" x2="88.9" y2="325.3"><stop offset="0" stop-color="rgb(5,5,5)"/><stop offset="1" stop-color="rgb(145,145,145)"/></linearGradient><linearGradient id="g116" gradientUnits="userSpaceOnUse" x1="88.9" y1="325.3" x2="171.8" y2="469.1"><stop offset="0" stop-color="rgb(145,145,145)"/><stop offset="1" stop-color="rgb(157,157,157)"/></linearGradient><linearGradient id="g117" gradientUnits="userSpaceOnUse" x1="88.9" y1="325.3" x2="221.4" y2="336.1"><stop offset="0" stop-color="rgb(145,145,145)"/><stop offset="1" stop-color="rgb(239,239,239)"/></linearGradient><linearGradient id="g118" gradientUnits="userSpaceOnUse" x1="171.8" y1="469.1" x2="221.4" y2="336.1"><stop offset="0" stop-color="rgb(157,157,157)"/><stop offset="1" stop-color="rgb(239,239,239)"/></linearGradient><linearGradient id="g119" gradientUnits="userSpaceOnUse" x1="221.4" y1="336.1" x2="387.9" y2="336.1"><stop offset="0" stop-color="rgb(239,239,239)"/><stop offset="1" stop-color="rgb(243,243,243)"/></linearGradient></defs><g stroke-width="1"><line x1="455.7" y1="406.0" x2="398.5" y2="279.7" stroke="url(#g0)"/><line x1="455.7" y1="406.0" x2="530.9" y2="290.5" stroke="url(#g1)"/><line x1="455.7" y1="406.0" x2="529.5" y2="440.7" stroke="url(#g2)"/><line x1="455.7" y1="406.0" x2="396.1" y2="522.6" stroke="url(#g3)"/><line x1="455.7" y1="406.0" x2="315.2" y2="423.1" stroke="url(#g4)"/><line x1="537.7" y1="435.8" x2="579.1" y2="307.9" stroke="url(#g5)"/><line x1="537.7" y1="435.8" x2="529.5" y2="440.7" stroke="url(#g6)"/><line x1="537.7" y1="435.8" x2="444.2" y2="540.3" stroke="url(#g7)"/><line x1="537.7" y1="435.8" x2="524.6" y2="325.3" stroke="url(#g8)"/><line x1="537.7" y1="435.8" x2="441.1" y2="469.1" stroke="url(#g9)"/><line x1="82.6" y1="180.1" x2="95.9" y2="290.5" stroke="url(#g10)"/><line x1="82.6" y1="180.1" x2="179.2" y2="147.0" stroke="url(#g11)"/><line x1="82.6" y1="180.1" x2="175.9" y2="75.6" stroke="url(#g12)"/><line x1="82.6" y1="180.1" x2="90.5" y2="175.0" stroke="url(#g13)"/><line x1="82.6" y1="180.1" x2="41.0" y2="307.9" stroke="url(#g14)"/><line x1="164.1" y1="209.6" x2="304.9" y2="192.3" stroke="url(#g15)"/><line x1="164.1" y1="209.6" x2="223.9" y2="92.8" stroke="url(#g16)"/><line x1="164.1" y1="209.6" x2="90.5" y2="175.0" stroke="url(#g17)"/><line x1="164.1" y1="209.6" x2="88.9" y2="325.3" stroke="url(#g18)"/><line x1="164.1" y1="209.6" x2="221.4" y2="336.1" stroke="url(#g19)"/><line x1="309.4" y1="40.4" x2="312.5" y2="64.9" stroke="url(#g20)"/><line x1="309.4" y1="40.4" x2="445.0" y2="75.6" stroke="url(#g21)"/><line x1="309.4" y1="40.4" x2="390.3" y2="92.8" stroke="url(#g22)"/><line x1="309.4" y1="40.4" x2="223.9" y2="92.8" stroke="url(#g23)"/><line x1="309.4" y1="40.4" x2="175.9" y2="75.6" stroke="url(#g24)"/><line x1="540.2" y1="180.1" x2="448.0" y2="147.0" stroke="url(#g25)"/><line x1="540.2" y1="180.1" x2="530.9" y2="290.5" stroke="url(#g26)"/><line x1="540.2" y1="180.1" x2="579.1" y2="307.9" stroke="url(#g27)"/><line x1="540.2" y1="180.1" x2="526.0" y2="175.0" stroke="url(#g28)"/><line x1="540.2" y1="180.1" x2="445.0" y2="75.6" stroke="url(#g29)"/><line x1="79.8" y1="435.7" x2="175.1" y2="540.2" stroke="url(#g30)"/><line x1="79.8" y1="435.7" x2="94.3" y2="440.6" stroke="url(#g31)"/><line x1="79.8" y1="435.7" x2="41.0" y2="307.9" stroke="url(#g32)"/><line x1="79.8" y1="435.7" x2="88.9" y2="325.3" stroke="url(#g33)"/><line x1="79.8" y1="435.7" x2="171.8" y2="469.1" stroke="url(#g34)"/><line x1="310.7" y1="575.3" x2="444.2" y2="540.3" stroke="url(#g35)"/><line x1="310.7" y1="575.3" x2="396.1" y2="522.6" stroke="url(#g36)"/><line x1="310.7" y1="575.3" x2="229.9" y2="522.6" stroke="url(#g37)"/><line x1="310.7" y1="575.3" x2="175.1" y2="540.2" stroke="url(#g38)"/><line x1="310.7" y1="575.3" x2="307.6" y2="551.2" stroke="url(#g39)"/><line x1="305.3" y1="454.2" x2="441.1" y2="469.1" stroke="url(#g40)"/><line x1="305.3" y1="454.2" x2="307.6" y2="551.2" stroke="url(#g41)"/><line x1="305.3" y1="454.2" x2="171.8" y2="469.1" stroke="url(#g42)"/><line x1="305.3" y1="454.2" x2="221.4" y2="336.1" stroke="url(#g43)"/><line x1="305.3" y1="454.2" x2="387.9" y2="336.1" stroke="url(#g44)"/><line x1="447.3" y1="209.6" x2="526.0" y2="175.0" stroke="url(#g45)"/><line x1="447.3" y1="209.6" x2="524.6" y2="325.3" stroke="url(#g46)"/><line x1="447.3" y1="209.6" x2="304.9" y2="192.3" stroke="url(#g47)"/><line x1="447.3" y1="209.6" x2="390.3" y2="92.8" stroke="url(#g48)"/><line x1="447.3" y1="209.6" x2="387.9" y2="336.1" stroke="url(#g49)"/><line x1="173.2" y1="405.9" x2="229.9" y2="522.6" stroke="url(#g50)"/><line x1="173.2" y1="405.9" x2="315.2" y2="423.1" stroke="url(#g51)"/><line x1="173.2" y1="405.9" x2="232.4" y2="279.7" stroke="url(#g52)"/><line x1="173.2" y1="405.9" x2="95.9" y2="290.5" stroke="url(#g53)"/><line x1="173.2" y1="405.9" x2="94.3" y2="440.6" stroke="url(#g54)"/><line x1="314.9" y1="161.9" x2="398.5" y2="279.7" stroke="url(#g55)"/><line x1="314.9" y1="161.9" x2="448.0" y2="147.0" stroke="url(#g56)"/><line x1="314.9" y1="161.9" x2="232.4" y2="279.7" stroke="url(#g57)"/><line x1="314.9" y1="161.9" x2="312.5" y2="64.9" stroke="url(#g58)"/><line x1="314.9" y1="161.9" x2="179.2" y2="147.0" stroke="url(#g59)"/><line x1="398.5" y1="279.7" x2="448.0" y2="147.0" stroke="url(#g60)"/><line x1="398.5" y1="279.7" x2="530.9" y2="290.5" stroke="url(#g61)"/><line x1="398.5" y1="279.7" x2="315.2" y2="423.1" stroke="url(#g62)"/><line x1="398.5" y1="279.7" x2="232.4" y2="279.7" stroke="url(#g63)"/><line x1="448.0" y1="147.0" x2="530.9" y2="290.5" stroke="url(#g64)"/><line x1="448.0" y1="147.0" x2="312.5" y2="64.9" stroke="url(#g65)"/><line x1="448.0" y1="147.0" x2="445.0" y2="75.6" stroke="url(#g66)"/><line x1="530.9" y1="290.5" x2="579.1" y2="307.9" stroke="url(#g67)"/><line x1="530.9" y1="290.5" x2="529.5" y2="440.7" stroke="url(#g68)"/><line x1="579.1" y1="307.9" x2="529.5" y2="440.7" stroke="url(#g69)"/><line x1="579.1" y1="307.9" x2="526.0" y2="175.0" stroke="url(#g70)"/><line x1="579.1" y1="307.9" x2="524.6" y2="325.3" stroke="url(#g71)"/><line x1="529.5" y1="440.7" x2="444.2" y2="540.3" stroke="url(#g72)"/><line x1="529.5" y1="440.7" x2="396.1" y2="522.6" stroke="url(#g73)"/><line x1="444.2" y1="540.3" x2="396.1" y2="522.6" stroke="url(#g74)"/><line x1="444.2" y1="540.3" x2="441.1" y2="469.1" stroke="url(#g75)"/><line x1="444.2" y1="540.3" x2="307.6" y2="551.2" stroke="url(#g76)"/><line x1="396.1" y1="522.6" x2="229.9" y2="522.6" stroke="url(#g77)"/><line x1="396.1" y1="522.6" x2="315.2" y2="423.1" stroke="url(#g78)"/><line x1="229.9" y1="522.6" x2="315.2" y2="423.1" stroke="url(#g79)"/><line x1="229.9" y1="522.6" x2="175.1" y2="540.2" stroke="url(#g80)"/><line x1="229.9" y1="522.6" x2="94.3" y2="440.6" stroke="url(#g81)"/><line x1="315.2" y1="423.1" x2="232.4" y2="279.7" stroke="url(#g82)"/><line x1="232.4" y1="279.7" x2="95.9" y2="290.5" stroke="url(#g83)"/><line x1="232.4" y1="279.7" x2="179.2" y2="147.0" stroke="url(#g84)"/><line x1="526.0" y1="175.0" x2="524.6" y2="325.3" stroke="url(#g85)"/><line x1="526.0" y1="175.0" x2="445.0" y2="75.6" stroke="url(#g86)"/><line x1="526.0" y1="175.0" x2="390.3" y2="92.8" stroke="url(#g87)"/><line x1="524.6" y1="325.3" x2="441.1" y2="469.1" stroke="url(#g88)"/><line x1="524.6" y1="325.3" x2="387.9" y2="336.1" stroke="url(#g89)"/><line x1="312.5" y1="64.9" x2="445.0" y2="75.6" stroke="url(#g90)"/><line x1="312.5" y1="64.9" x2="179.2" y2="147.0" stroke="url(#g91)"/><line x1="312.5" y1="64.9" x2="175.9" y2="75.6" stroke="url(#g92)"/><line x1="445.0" y1="75.6" x2="390.3" y2="92.8" stroke="url(#g93)"/><line x1="95.9" y1="290.5" x2="179.2" y2="147.0" stroke="url(#g94)"/><line x1="95.9" y1="290.5" x2="94.3" y2="440.6" stroke="url(#g95)"/><line x1="95.9" y1="290.5" x2="41.0" y2="307.9" stroke="url(#g96)"/><line x1="179.2" y1="147.0" x2="175.9" y2="75.6" stroke="url(#g97)"/><line x1="175.1" y1="540.2" x2="94.3" y2="440.6" stroke="url(#g98)"/><line x1="175.1" y1="540.2" x2="307.6" y2="551.2" stroke="url(#g99)"/><line x1="175.1" y1="540.2" x2="171.8" y2="469.1" stroke="url(#g100)"/><line x1="94.3" y1="440.6" x2="41.0" y2="307.9" stroke="url(#g101)"/><line x1="441.1" y1="469.1" x2="307.6" y2="551.2" stroke="url(#g102)"/><line x1="441.1" y1="469.1" x2="387.9" y2="336.1" stroke="url(#g103)"/><line x1="307.6" y1="551.2" x2="171.8" y2="469.1" stroke="url(#g104)"/><line x1="304.9" y1="192.3" x2="390.3" y2="92.8" stroke="url(#g105)"/><line x1="304.9" y1="192.3" x2="223.9" y2="92.8" stroke="url(#g106)"/><line x1="304.9" y1="192.3" x2="221.4" y2="336.1" stroke="url(#g107)"/><line x1="304.9" y1="192.3" x2="387.9" y2="336.1" stroke="url(#g108)"/><line x1="390.3" y1="92.8" x2="223.9" y2="92.8" stroke="url(#g109)"/><line x1="223.9" y1="92.8" x2="175.9" y2="75.6" stroke="url(#g110)"/><line x1="223.9" y1="92.8" x2="90.5" y2="175.0" stroke="url(#g111)"/><line x1="175.9" y1="75.6" x2="90.5" y2="175.0" stroke="url(#g112)"/><line x1="90.5" y1="175.0" x2="41.0" y2="307.9" stroke="url(#g113)"/><line x1="90.5" y1="175.0" x2="88.9" y2="325.3" stroke="url(#g114)"/><line x1="41.0" y1="307.9" x2="88.9" y2="325.3" stroke="url(#g115)"/><line x1="88.9" y1="325.3" x2="171.8" y2="469.1" stroke="url(#g116)"/><line x1="88.9" y1="325.3" x2="221.4" y2="336.1" stroke="url(#g117)"/><line x1="171.8" y1="469.1" x2="221.4" y2="336.1" stroke="url(#g118)"/><line x1="221.4" y1="336.1" x2="387.9" y2="336.1" stroke="url(#g119)"/></g></svg></div>
<!-- status bar -->
<div class="a" style="left:93px;top:706px;width:878px;height:1px;background:#8a8a8a"></div>
<div class="a" style="left:93px;top:707px;width:878px;height:1px;background:#fff"></div>
<div class="a tk" style="left:96px;top:712px">Window</div>
<div class="a" style="left:791px;top:710px;width:157px;height:21px;border:1px solid;border-color:#8a8a8a #fff #fff #8a8a8a"></div>
<div class="a" style="left:947px;top:710px;width:24px;height:21px;border:1px solid;border-color:#8a8a8a #fff #fff #8a8a8a"></div>
<!-- taskbar -->
<div class="a" style="left:0;top:743px;width:1024px;height:25px;background:#e6e6e6"></div>
<div class="a" style="left:0;top:743px;width:1024px;height:1px;background:#fff"></div>
<div class="a" style="left:0;top:744px;width:31px;height:24px;border:1px solid #6a6a6a;border-bottom:none;box-shadow:inset 1px 1px 0 #fff"></div>
<svg class="a" style="left:5px;top:749px" width="22" height="16" viewBox="0 0 22 16">
 <path d="M1.5 8 L10 5 L21 9.5 L13 13.5Z" fill="#c9a050" stroke="#7a6030" stroke-width="0.6"/>
 <path d="M11 2 L19 1 L24 8 L15 11Z" fill="#c8c8c8" stroke="#777" stroke-width="0.5"/>
 <path d="M13 4 L19 2.5 L21 7 L15 9Z" fill="#1a60e0"/>
 <path d="M17 5 L22 3.5 L23 8 L18 9.5Z" fill="#30b040"/>
 <path d="M3 12 L9 9.5 L14 12.5 L8 15.5Z" fill="#e4e4e4" stroke="#888" stroke-width="0.6"/>
</svg>
<svg class="a" style="left:33px;top:745px" width="7" height="22" viewBox="0 0 7 22"><path d="M1.5 6.5 L5.5 2.5 M1.5 11.5 L5.5 7.5 M1.5 16.5 L5.5 12.5 M1.5 21.5 L5.5 17.5" stroke="#555" stroke-width="1" stroke-dasharray="1 0.5"/><path d="M2 7.5 L6 3.5 M2 12.5 L6 8.5 M2 17.5 L6 13.5" stroke="#fff" stroke-width="0.8"/></svg>
<div class="a" style="left:41px;top:744px;width:149px;height:24px;border:1px solid #6a6a6a;border-bottom:none;box-shadow:inset 1px 1px 0 #fff"></div>
<div class="a" style="left:189px;top:744px;width:150px;height:24px;background:#d2d2d2;border:1px solid #6a6a6a;border-bottom:none;box-shadow:inset 1px 1px 0 #9a9a9a, inset 0 -2px 0 #fff"></div>
<div class="a" style="left:338px;top:744px;width:151px;height:24px;border:1px solid #6a6a6a;border-bottom:none;box-shadow:inset 1px 1px 0 #fff"></div>
<svg class="a" style="left:44px;top:749px" width="16" height="15" viewBox="0 0 16 15"><defs><linearGradient id="tm" x1="0" y1="0" x2="0" y2="1"><stop offset="0" stop-color="#b8b4a8"/><stop offset="1" stop-color="#6a655a"/></linearGradient></defs><rect x="0.5" y="0.5" width="15" height="13.5" rx="1.5" fill="url(#tm)" stroke="#3a3830"/><rect x="2.5" y="2.5" width="11" height="8.5" fill="#2e3632"/><path d="M4 8.5 H6" stroke="#9aa" stroke-width="1"/></svg>
<div class="a ptxt" style="left:63px;top:749px">delphine@localhost:~</div>
<svg class="a" style="left:194px;top:748px" width="15" height="16" viewBox="0 0 15 16"><defs><linearGradient id="dc" x1="0" y1="0" x2="1" y2="1"><stop offset="0" stop-color="#fff"/><stop offset="1" stop-color="#d0d0d0"/></linearGradient></defs><path d="M1 1.5 Q1 1 1.5 1 H11.5 L14 3.5 V14.5 Q14 15 13.5 15 H1.5 Q1 15 1 14.5Z" fill="url(#dc)" stroke="#404040" stroke-width="1"/></svg>
<div class="a ptxt" style="left:213px;top:749px">KWMeshVisu</div>
<svg class="a" style="left:342px;top:749px" width="16" height="15" viewBox="0 0 16 15"><rect x="0.5" y="0.5" width="15" height="13.5" rx="1.5" fill="url(#tm)" stroke="#3a3830"/><rect x="2.5" y="2.5" width="11" height="8.5" fill="#2e3632"/><path d="M4 8.5 H6" stroke="#9aa" stroke-width="1"/></svg>
<div class="a ptxt" style="left:362px;top:749px">delphine@localhost:~</div>
<!-- workspace switcher -->
<div class="a" style="left:914px;top:745px;width:109px;height:22px;background:#a2a2a2;border:1px solid #8a8a8a"></div>
<div class="a" style="left:914px;top:745px;width:28px;height:22px;background:#2b3f72"></div>
<div class="a" style="left:917px;top:747px;width:23px;height:17px;background:#4262b0;border:1px solid #fff"></div>
<div class="a" style="left:939px;top:748px;width:2px;height:10px;background:#000"></div>
<div class="a" style="left:968px;top:746px;width:1px;height:20px;background:#f0f0f0"></div>
<div class="a" style="left:995px;top:746px;width:1px;height:20px;background:#f0f0f0"></div>
</body></html>
